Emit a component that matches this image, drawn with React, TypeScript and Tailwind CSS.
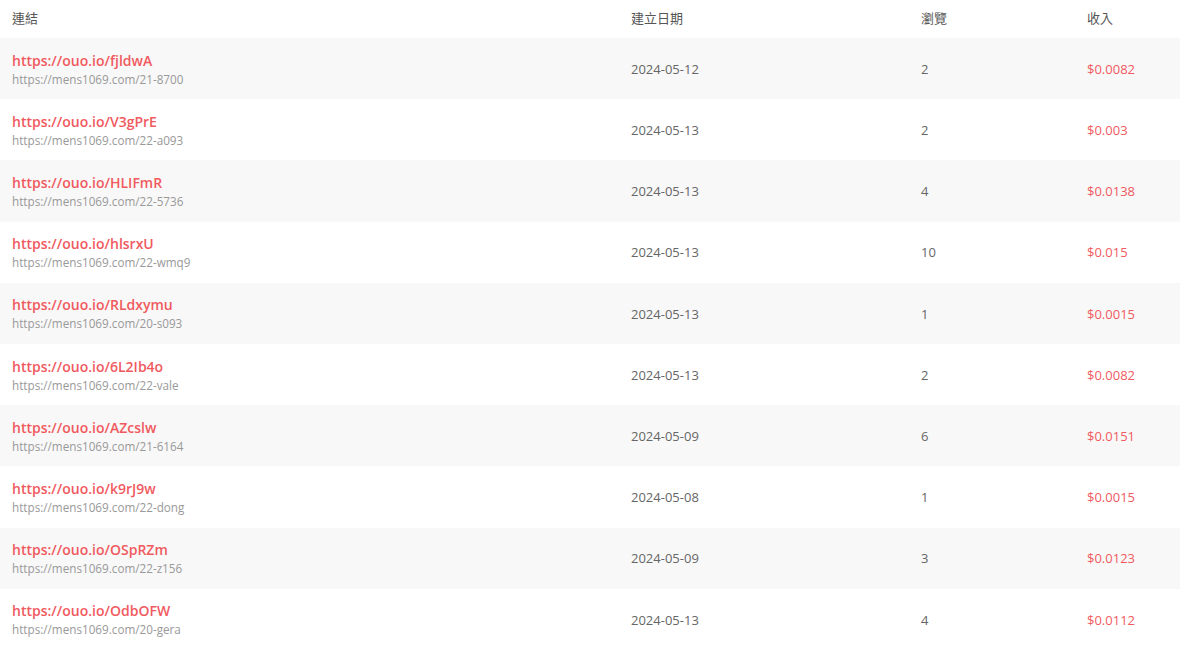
import React from 'react';

type Row = { short: string; target: string; date: string; views: number; earn: string };

const rows: Row[] = [
  { short: 'https://ouo.io/fjldwA', target: 'https://mens1069.com/21-8700', date: '2024-05-12', views: 2, earn: '$0.0082' },
  { short: 'https://ouo.io/V3gPrE', target: 'https://mens1069.com/22-a093', date: '2024-05-13', views: 2, earn: '$0.003' },
  { short: 'https://ouo.io/HLIFmR', target: 'https://mens1069.com/22-5736', date: '2024-05-13', views: 4, earn: '$0.0138' },
  { short: 'https://ouo.io/hlsrxU', target: 'https://mens1069.com/22-wmq9', date: '2024-05-13', views: 10, earn: '$0.015' },
  { short: 'https://ouo.io/RLdxymu', target: 'https://mens1069.com/20-s093', date: '2024-05-13', views: 1, earn: '$0.0015' },
  { short: 'https://ouo.io/6L2Ib4o', target: 'https://mens1069.com/22-vale', date: '2024-05-13', views: 2, earn: '$0.0082' },
  { short: 'https://ouo.io/AZcslw', target: 'https://mens1069.com/21-6164', date: '2024-05-09', views: 6, earn: '$0.0151' },
  { short: 'https://ouo.io/k9rJ9w', target: 'https://mens1069.com/22-dong', date: '2024-05-08', views: 1, earn: '$0.0015' },
  { short: 'https://ouo.io/OSpRZm', target: 'https://mens1069.com/22-z156', date: '2024-05-09', views: 3, earn: '$0.0123' },
  { short: 'https://ouo.io/OdbOFW', target: 'https://mens1069.com/20-gera', date: '2024-05-13', views: 4, earn: '$0.0112' },
];

const cols = 'grid grid-cols-[619px_290px_166px_1fr] items-center';

export default function App() {
  return (
    <div
      className="w-[1180px] h-[660px] bg-white text-[13px] text-[#666]"
      style={{ fontFamily: '"Open Sans", "Noto Sans CJK TC", sans-serif' }}
    >
      <div className={`${cols} h-[38px] text-[#555]`}>
        <div className="pl-3">連結</div>
        <div className="pl-3">建立日期</div>
        <div className="pl-3">瀏覽</div>
        <div className="pl-3">收入</div>
      </div>
      {rows.map((r, i) => (
        <div key={r.short} className={`${cols} h-[61.2px] ${i % 2 === 0 ? 'bg-[#f8f8f8]' : 'bg-white'}`}>
          <div className="pl-3 pt-0.5 flex flex-col">
            <a className="text-[14px] font-semibold text-[#f05a5f] leading-[18px]">{r.short}</a>
            <span className="text-[11.7px] text-[#999] leading-[18px]">{r.target}</span>
          </div>
          <div className="pl-3 pt-0.5">{r.date}</div>
          <div className="pl-3 pt-0.5">{r.views}</div>
          <div className="pl-3 pt-0.5 text-[#f05a5f]">{r.earn}</div>
        </div>
      ))}
    </div>
  );
}
